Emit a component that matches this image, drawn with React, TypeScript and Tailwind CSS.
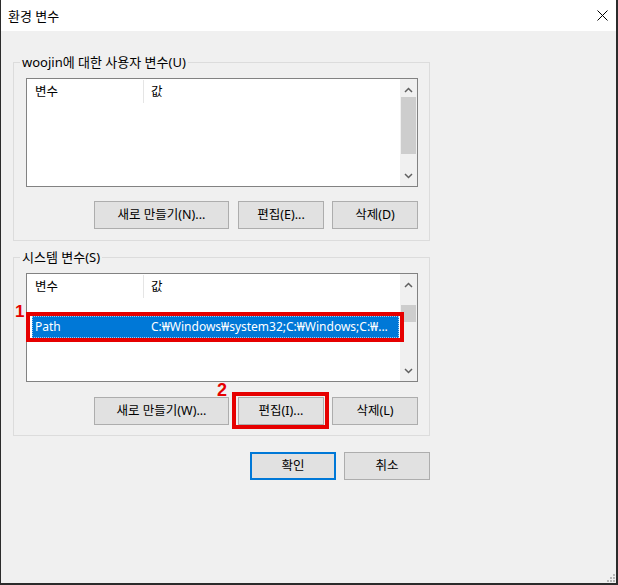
import React from "react";

const Up = () => (
  <svg width="9" height="6" viewBox="0 0 9 6">
    <path d="M1 5 L4.5 1.5 L8 5" stroke="#606060" strokeWidth="1.5" fill="none" />
  </svg>
);
const Down = () => (
  <svg width="9" height="6" viewBox="0 0 9 6">
    <path d="M1 1 L4.5 4.5 L8 1" stroke="#606060" strokeWidth="1.5" fill="none" />
  </svg>
);

function Btn({ children, w, className = "" }: { children: React.ReactNode; w: string; className?: string }) {
  return (
    <div
      className={`h-[28px] ${w} bg-[#e1e1e1] border border-[#adadad] flex items-center justify-center text-[12.5px] leading-[16px] ${className}`}
    >
      {children}
    </div>
  );
}

function Scrollbar({ thumbTop, thumbH }: { thumbTop: string; thumbH: string }) {
  return (
    <div className="w-[17px] bg-[#f0f0f0] flex flex-col">
      <div className="h-[18px] flex justify-center pt-[8px]">
        <Up />
      </div>
      <div className={`${thumbTop} ${thumbH} mx-[1px] w-[15px] bg-[#cdcdcd]`} />
      <div className="flex-1" />
      <div className="h-[18px] flex justify-center pt-[5px]">
        <Down />
      </div>
    </div>
  );
}

function Header() {
  return (
    <div className="h-[25px] flex items-center text-[12.5px]">
      <div className="w-[116px] pl-[8px] leading-[16px]">변수</div>
      <div className="w-px h-[23px] bg-[#e5e5e5]" />
      <div className="pl-[7px] leading-[16px]">값</div>
    </div>
  );
}

function Group({ label, children }: { label: string; children: React.ReactNode }) {
  return (
    <fieldset className="w-[417px] border border-[#dcdcdc] m-0 p-0">
      <legend className="ml-[6px] px-[2px] text-[13px] leading-[16px]">{label}</legend>
      {children}
    </fieldset>
  );
}

export default function App() {
  return (
    <div className="relative w-[618px] h-[585px] flex flex-col bg-[#f0f0f0] border-l border-r-2 border-b-2 border-[#2b2b2b] text-[12px] text-black font-['Noto_Sans','Noto_Sans_CJK_KR',sans-serif]">
      <div className="h-[31px] shrink-0 bg-white flex items-center justify-between pl-[7px] pr-[8px]">
        <span className="text-[13px] leading-[16px]">환경 변수</span>
        <svg width="11" height="11" viewBox="0 0 11 11">
          <path d="M0.5 0.5 L10.5 10.5 M10.5 0.5 L0.5 10.5" stroke="#000" strokeWidth="1" />
        </svg>
      </div>

      <div className="flex flex-col pl-[12px] pt-[23px]">
        <Group label="woojin에 대한 사용자 변수(U)">
          <div className="pl-[12px] pr-[11px] pt-[8px] pb-[11px]">
            <div className="h-[109px] w-[392px] border border-[#828282] bg-white flex">
              <div className="flex-1 flex flex-col">
                <Header />
              </div>
              <Scrollbar thumbTop="mt-0" thumbH="h-[57px]" />
            </div>
            <div className="mt-[14px] flex justify-end gap-[8px]">
              <Btn w="w-[135px]" className="mr-[1px]">새로 만들기(N)...</Btn>
              <Btn w="w-[86px]">편집(E)...</Btn>
              <Btn w="w-[86px]">삭제(D)</Btn>
            </div>
          </div>
        </Group>

        <div className="mt-[8px]">
          <Group label="시스템 변수(S)">
            <div className="pl-[12px] pr-[11px] pt-[8px] pb-[10px]">
              <div className="h-[109px] w-[392px] border border-[#828282] bg-white flex">
                <div className="flex-1 flex flex-col">
                  <Header />
                  <div className="ml-[5px] mt-[17px] h-[22px] w-[367px] bg-[#0078d7] text-white flex items-center border border-dotted border-[#9fc9ee] leading-[16px]">
                    <div className="w-[118px] pl-[2px]">Path</div>
                    <div>C:₩Windows₩system32;C:₩Windows;C:₩...</div>
                  </div>
                </div>
                <Scrollbar thumbTop="mt-[13px]" thumbH="h-[17px]" />
              </div>
              <div className="mt-[15px] flex justify-end gap-[8px]">
                <Btn w="w-[135px]" className="mr-[1px]">새로 만들기(W)...</Btn>
                <Btn w="w-[86px]">편집(I)...</Btn>
                <Btn w="w-[86px]">삭제(L)</Btn>
              </div>
            </div>
          </Group>
        </div>

        <div className="w-[417px] mt-[16px] flex justify-end gap-[8px]">
          <div className="h-[28px] w-[86px] bg-[#e1e1e1] border-2 border-[#0078d7] flex items-center justify-center text-[12.5px] leading-[16px]">
            확인
          </div>
          <Btn w="w-[86px]">취소</Btn>
        </div>
      </div>

      {/* annotations */}
      <div className="absolute left-[25px] top-[312px] w-[378px] h-[30px] border-4 border-[#e60000]" />
      <div className="absolute left-[231px] top-[392px] w-[97px] h-[37px] border-4 border-[#e60000]" />
      <div className="absolute left-[14px] top-[303px] text-[17px] leading-[17px] font-bold text-[#e60000] font-['Liberation_Sans',sans-serif]">
        1
      </div>
      <div className="absolute left-[216px] top-[381px] text-[18px] leading-[18px] font-bold text-[#e60000] font-['Liberation_Sans',sans-serif]">
        2
      </div>

      <svg className="absolute right-[1px] bottom-[1px]" width="10" height="10" viewBox="0 0 10 10">
        <rect x="8" y="2" width="2" height="2" fill="#b8b8b8" />
        <rect x="5" y="5" width="2" height="2" fill="#b8b8b8" />
        <rect x="8" y="5" width="2" height="2" fill="#b8b8b8" />
        <rect x="2" y="8" width="2" height="2" fill="#b8b8b8" />
        <rect x="5" y="8" width="2" height="2" fill="#b8b8b8" />
        <rect x="8" y="8" width="2" height="2" fill="#b8b8b8" />
      </svg>
    </div>
  );
}
